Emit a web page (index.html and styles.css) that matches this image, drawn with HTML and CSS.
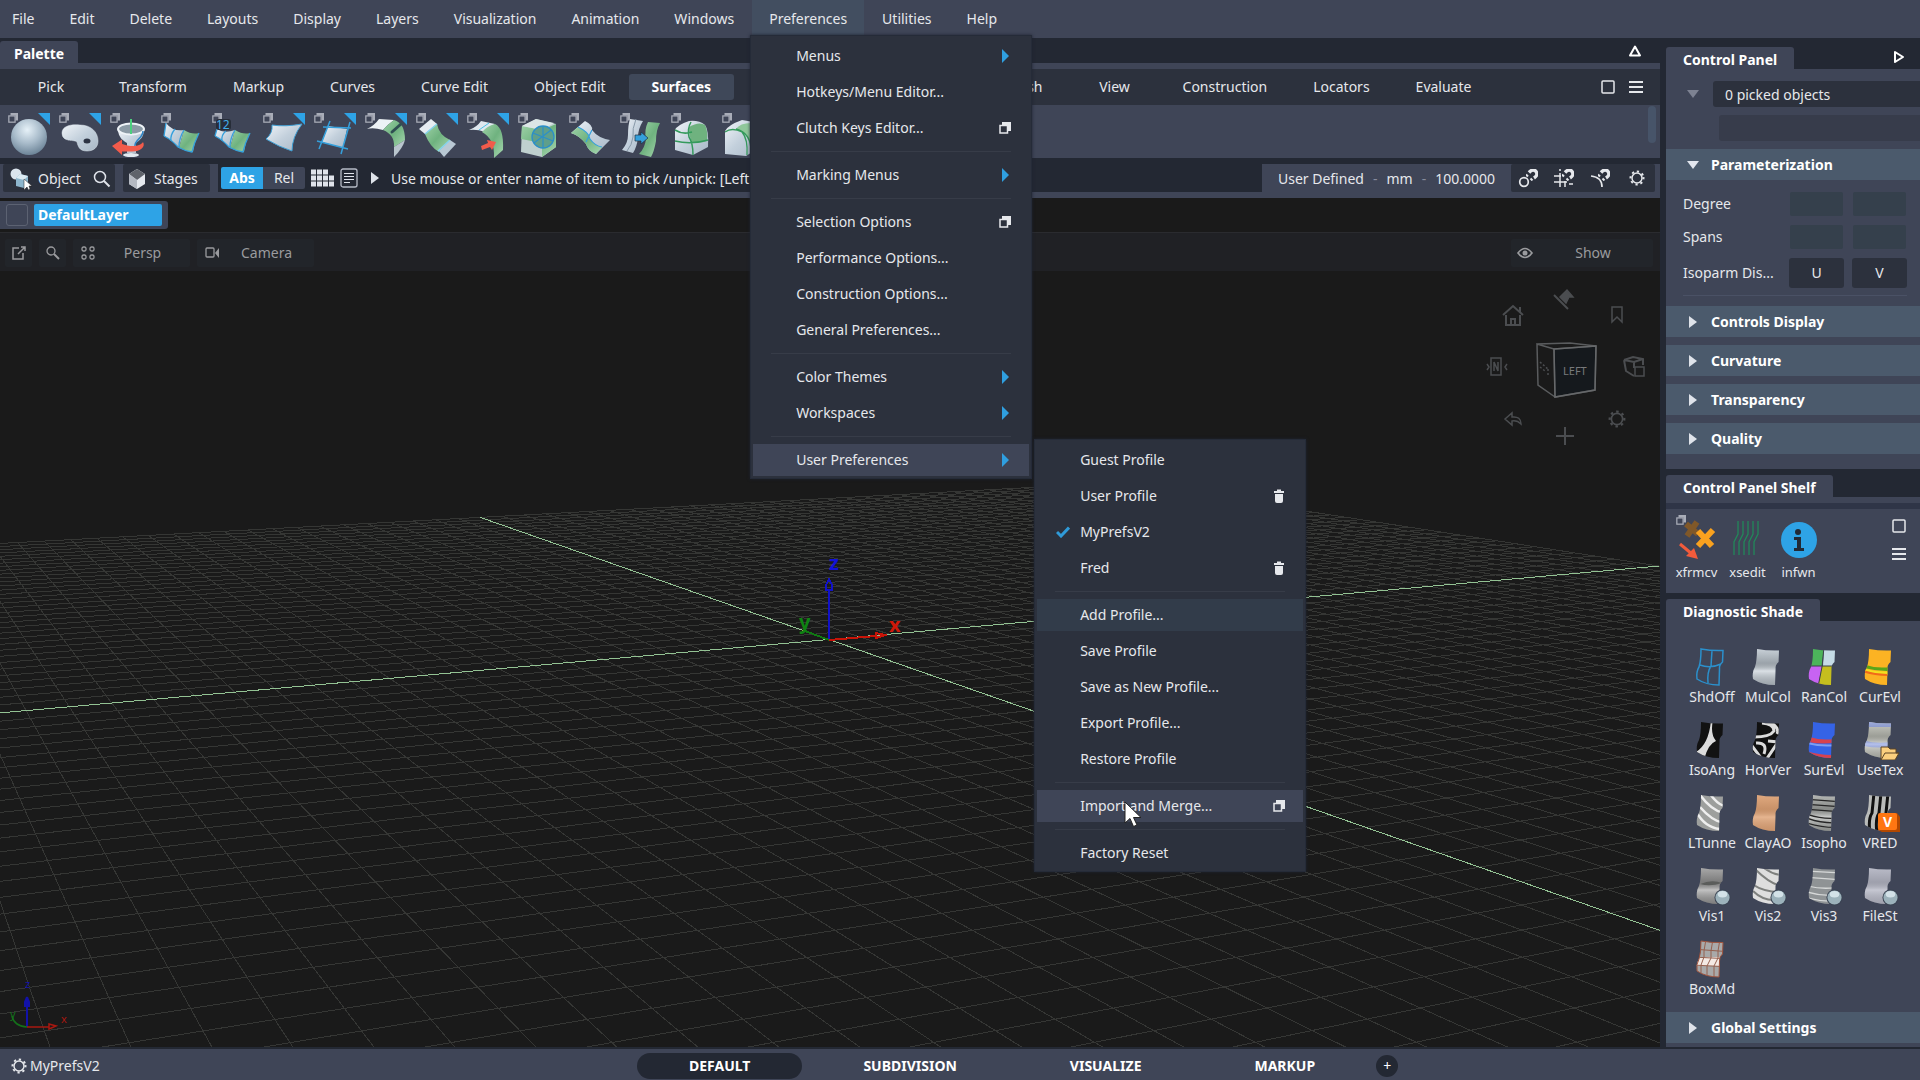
FILE: index.html
```html
<!DOCTYPE html>
<html lang="en">
<head>
    <meta charset="UTF-8">
    <meta name="viewport" content="width=device-width, initial-scale=1.0">
    <title>Surface Modeler</title>
    <link rel="stylesheet" href="styles.css">
</head>
<body>

    <!-- shared icon shapes -->
    <svg class="defs" width="0" height="0" aria-hidden="true">
        <defs>
            <linearGradient id="steel" x1="0" y1="0" x2="1" y2="1"><stop offset="0" stop-color="#f0f4f8"/><stop offset="0.5" stop-color="#c3d0dc"/><stop offset="1" stop-color="#a9b8c6"/></linearGradient>
            <linearGradient id="green" x1="0" y1="0" x2="1" y2="1"><stop offset="0" stop-color="#9ed2a8"/><stop offset="0.5" stop-color="#6fb27f"/><stop offset="1" stop-color="#a8d8b0"/></linearGradient>
            <radialGradient id="ball" cx="0.45" cy="0.3" r="0.75"><stop offset="0" stop-color="#e6f1f8"/><stop offset="0.5" stop-color="#a9bccb"/><stop offset="1" stop-color="#647c90"/></radialGradient>
            <linearGradient id="fold" x1="0" y1="0" x2="0" y2="1"><stop offset="0" stop-color="#fff" stop-opacity="0.2"/><stop offset="0.4" stop-color="#000" stop-opacity="0.2"/><stop offset="0.6" stop-color="#fff" stop-opacity="0.4"/><stop offset="1" stop-color="#000" stop-opacity="0.2"/></linearGradient>
            <clipPath id="sheet"><path d="M9 2Q20 4 31 3.500L30.500 15Q27 18 27.500 22L27 38Q14 38 5 32Q4 25 7 20Q9 14 9 2Z"/></clipPath>
            <symbol id="opt" viewBox="0 0 12 12"><path d="M3 0H12V9H9V3H3Z" fill="currentColor"/><rect x="1" y="3.500" width="7.500" height="7.500" fill="none" stroke="currentColor" stroke-width="1.500"/></symbol>
            <symbol id="corner" viewBox="0 0 12 12"><path d="M0 0H12V12Z" fill="#2ea3e6"/></symbol>
            <symbol id="gear" viewBox="0 0 16 16"><circle cx="8" cy="8" r="5" fill="none" stroke="currentColor" stroke-width="1.500"/><circle cx="8" cy="8" r="6.500" fill="none" stroke="currentColor" stroke-width="2" stroke-dasharray="2.200 2.900" transform="rotate(-8 8 8)"/></symbol>
            <symbol id="trash" viewBox="0 0 12 14"><path d="M1 2H4V0.500H8V2H11V4H1ZM2 5H10V12Q10 14 8 14H4Q2 14 2 12Z" fill="currentColor"/></symbol>
            <symbol id="magnet" viewBox="0 0 12 12"><path d="M3 3.500Q7 -1 10 2.500Q12.500 6 8 9" fill="none" stroke="currentColor" stroke-width="3.400"/><path d="M0 5.500L2 7.500M4.500 9.500L6.500 11.500" stroke="currentColor" stroke-width="2"/></symbol>
            <symbol id="box" viewBox="0 0 14 14"><rect x="1" y="1" width="12" height="12" rx="1" fill="none" stroke="currentColor" stroke-width="1.500"/></symbol>
            <symbol id="bars" viewBox="0 0 14 12"><path d="M0 1H14M0 6H14M0 11H14" stroke="currentColor" stroke-width="2"/></symbol>
            <symbol id="marble" viewBox="0 0 18 18"><circle cx="9" cy="9" r="8.500" fill="#3a4352"/><circle cx="9" cy="9" r="7.500" fill="#9cb2bb"/><ellipse cx="9" cy="5.500" rx="5" ry="3.500" fill="#d3e2e8"/></symbol>
        </defs>
    </svg>

    <nav class="menubar">
        <button>File</button>
        <button>Edit</button>
        <button>Delete</button>
        <button>Layouts</button>
        <button>Display</button>
        <button>Layers</button>
        <button>Visualization</button>
        <button>Animation</button>
        <button>Windows</button>
        <div class="menu-holder">
            <button class="open">Preferences</button>
            <ul class="menu main-menu">
                <li><button>Menus<span class="arrow"></span></button></li>
                <li><button>Hotkeys/Menu Editor...</button></li>
                <li><button>Clutch Keys Editor...<svg width="12" height="12"><use href="#opt"/></svg></button></li>
                <li class="sep"></li>
                <li><button>Marking Menus<span class="arrow"></span></button></li>
                <li class="sep"></li>
                <li><button>Selection Options<svg width="12" height="12"><use href="#opt"/></svg></button></li>
                <li><button>Performance Options...</button></li>
                <li><button>Construction Options...</button></li>
                <li><button>General Preferences...</button></li>
                <li class="sep"></li>
                <li><button>Color Themes<span class="arrow"></span></button></li>
                <li><button>Workspaces<span class="arrow"></span></button></li>
                <li class="sep"></li>
                <li>
                    <button class="active">User Preferences<span class="arrow"></span></button>
                    <ul class="menu sub-menu">
                        <li><button>Guest Profile</button></li>
                        <li><button>User Profile<svg width="12" height="14"><use href="#trash"/></svg></button></li>
                        <li><button>MyPrefsV2</button><svg class="check" width="14" height="12" viewBox="0 0 14 12"><path d="M1 6L5 10L13 1.500" fill="none" stroke="#2f9ad8" stroke-width="3"/></svg></li>
                        <li><button>Fred<svg width="12" height="14"><use href="#trash"/></svg></button></li>
                        <li class="sep"></li>
                        <li><button class="soft">Add Profile...</button></li>
                        <li><button>Save Profile</button></li>
                        <li><button>Save as New Profile...</button></li>
                        <li><button>Export Profile...</button></li>
                        <li><button>Restore Profile</button></li>
                        <li class="sep"></li>
                        <li>
                            <button class="active">Import and Merge...<svg width="12" height="12"><use href="#opt"/></svg></button>
                            <svg class="cursor" width="19" height="27" viewBox="0 0 19 27"><path d="M1 1V22L6 17.500L9.500 25.500L13 24L9.500 16.500H17Z" fill="#fff" stroke="#222" stroke-width="1"/></svg>
                        </li>
                        <li class="sep"></li>
                        <li><button>Factory Reset</button></li>
                    </ul>
                </li>
            </ul>
        </div>
        <button>Utilities</button>
        <button>Help</button>
    </nav>

    <main class="workspace">
        <section class="left">

            <div class="strip">
                <h2 class="tab">Palette</h2>
                <svg class="collapse" width="14" height="12" viewBox="0 0 14 12"><path d="M7 1.500L12 10.500H2Z" fill="none" stroke="#fff" stroke-width="2" stroke-linejoin="round"/></svg>
            </div>

            <div class="categories">
                <button>Pick</button>
                <button>Transform</button>
                <button>Markup</button>
                <button>Curves</button>
                <button>Curve Edit</button>
                <button>Object Edit</button>
                <button class="current">Surfaces</button>
                <button>Surface Edit</button>
                <button>Subdivision</button>
                <button>Mesh</button>
                <button>View</button>
                <button>Construction</button>
                <button>Locators</button>
                <button>Evaluate</button>
                <span class="category-icons">
                    <svg width="14" height="14"><use href="#box"/></svg>
                    <svg width="14" height="12"><use href="#bars"/></svg>
                </span>
            </div>

            <div class="tools">
                <button aria-label="Sphere"><svg viewBox="0 0 51 53"><circle cx="25" cy="32" r="18" fill="url(#ball)"/><use href="#opt" x="4" y="8" width="10" height="10"/><use href="#corner" x="34" y="8" width="12" height="12"/></svg></button>
                <button aria-label="Planar"><svg viewBox="0 0 51 53"><path d="M7 28C7 21 16 19 25 20C36 20 43 27 43 36C43 43 38 46 32 46C24 46 23 41 22 37C20 34 7 38 7 28Z" fill="url(#steel)" stroke="#dfe8f0" stroke-width="0.500"/><ellipse cx="32" cy="36" rx="3.500" ry="2.500" fill="#2d3444"/><use href="#opt" x="4" y="8" width="10" height="10"/><use href="#corner" x="34" y="8" width="12" height="12"/></svg></button>
                <button aria-label="Revolve"><svg viewBox="0 0 51 53"><path d="M12 24C12 33 18 36 21 38V48H30V38C34 35 38 32 38 24Z" fill="url(#steel)"/><ellipse cx="25" cy="24" rx="13" ry="5.500" fill="#8b9aa5" stroke="#eef3f7" stroke-width="2"/><path d="M25 14V29" stroke="#4bd07d" stroke-width="2"/><path d="M37 26C37 34 28 34 29 42L25 44" fill="none" stroke="#2d83c4" stroke-width="1.500"/><path d="M37 37C40 42 34 47 25 46.500H16V50L6 41L16 34.500V39C24 42 34 42 37 37Z" fill="#f25b4b"/><ellipse cx="25" cy="50" rx="8" ry="2" fill="#e2eaf1"/><use href="#opt" x="4" y="8" width="10" height="10"/></svg></button>
                <button aria-label="Skin"><svg viewBox="0 0 51 53"><path d="M9 18Q16 27 27 25L22 43Q15 35 7 31Z" fill="url(#steel)"/><path d="M27 25Q35 30 42 28Q37 38 36 47Q28 46 22 43Z" fill="url(#green)"/><path d="M9 18Q8 25 7 31M18 24Q13 30 14 36M27 25Q22 33 22 42M42 28Q37 38 35 47Q28 46 21 42Q15 35 7 31" fill="none" stroke="#35a0dc" stroke-width="1.300"/><use href="#opt" x="4" y="8" width="10" height="10"/></svg></button>
                <button aria-label="Rail"><svg viewBox="0 0 51 53"><path d="M9 24Q16 29 27 25L22 43Q15 35 7 31Z" fill="url(#steel)"/><path d="M27 25Q35 30 42 28Q37 38 36 47Q28 46 22 43Z" fill="url(#green)"/><path d="M9 24L7 31M18 26Q13 30 14 36M27 25Q22 33 22 42M42 28Q37 38 35 47Q28 46 21 42Q15 35 7 31" fill="none" stroke="#35a0dc" stroke-width="1.300"/><use href="#opt" x="4" y="8" width="10" height="10"/><rect x="8" y="14" width="15" height="11" rx="3" fill="#272d38"/><text x="8" y="24" class="count">12</text></svg></button>
                <button aria-label="Square"><svg viewBox="0 0 51 53"><path d="M13 20Q26 22 43 19Q33 32 33 46Q20 42 7 34Q14 28 13 20Z" fill="url(#steel)" stroke="#3f9fd4" stroke-width="1"/><use href="#opt" x="4" y="8" width="10" height="10"/><use href="#corner" x="34" y="8" width="12" height="12"/></svg></button>
                <button aria-label="Bevel"><svg viewBox="0 0 51 53"><path d="M18 21L37 24L33 43L12 37Z" fill="url(#steel)"/><path d="M13 22L41 23M20 16L9 44M40 17L31 49M7 36L38 44" stroke="#35a0dc" stroke-width="1.500"/><use href="#opt" x="4" y="8" width="10" height="10"/><use href="#corner" x="34" y="8" width="12" height="12"/></svg></button>
                <button aria-label="Fillet"><svg viewBox="0 0 51 53"><use href="#corner" x="34" y="8" width="12" height="12"/><path d="M6 24Q14 20 18 14L33 15Q26 20 22 25Q12 22 6 24Z" fill="#edf2f5"/><path d="M33 15Q44 18 44 35L33 42Q34 30 22 25Q26 20 33 15Z" fill="url(#green)"/><path d="M33 42L44 35Q42 43 33 52Z" fill="#b9c5cd"/><path d="M31 27L40 19" stroke="#2f4f52" stroke-width="3" stroke-linecap="round"/><use href="#opt" x="4" y="8" width="10" height="10"/></svg></button>
                <button aria-label="Flange"><svg viewBox="0 0 51 53"><path d="M7 24L19 14L25 19L13 29Z" fill="#e6ecf2"/><path d="M25 19Q27 30 38 35L27 47Q18 42 13 29Z" fill="url(#green)"/><path d="M38 35L44 39L32 52L27 46Z" fill="#b9c8d4"/><path d="M25 19L13 29M38 35L26 46" stroke="#86d3ee" stroke-width="1.500"/><use href="#opt" x="4" y="8" width="10" height="10"/><use href="#corner" x="34" y="8" width="12" height="12"/></svg></button>
                <button aria-label="Extend"><svg viewBox="0 0 51 53"><path d="M6 25Q14 22 18 16L32 19Q26 22 22 27Q14 24 6 25Z" fill="#dfe8ef"/><path d="M32 19Q41 23 40 45L31 53Q32 34 19 27Q24 21 32 19Z" fill="url(#green)"/><path d="M16 25L26 18" stroke="#4cc0e8" stroke-width="1"/><path d="M18 41L25 38L24 35L33 37L29 45L27 42L19 45Z" fill="#f25b4b"/><use href="#opt" x="4" y="8" width="10" height="10"/><use href="#corner" x="34" y="8" width="12" height="12"/></svg></button>
                <button aria-label="Tube offset"><svg viewBox="0 0 51 53"><path d="M8 21L22 14L42 19V42L28 52L7 47Z" fill="#bfd0cf"/><path d="M8 21L28 25V38L7 34ZM28 25L42 19V42L28 52Z" fill="url(#green)"/><path d="M8 21L22 14L40 18L28 25Z" fill="#dce6e6"/><circle cx="29" cy="32" r="11" fill="#5f9f8b" stroke="#2c8fc8" stroke-width="1.300"/><path d="M29 21V43M19 28L39 36M20 38L37 25" stroke="#2c8fc8" stroke-width="1.200"/><use href="#opt" x="4" y="8" width="10" height="10"/></svg></button>
                <button aria-label="Blend"><svg viewBox="0 0 51 53"><path d="M6 28L20 16Q28 20 27 25Q33 33 45 35L31 49Q23 46 21 39Q15 31 6 28Z" fill="url(#steel)"/><path d="M6 28L13 22Q24 27 25 34Q30 41 37 42L31 49Q23 46 21 39Q15 31 6 28Z" fill="url(#green)"/><path d="M13 22Q24 27 25 34Q30 41 37 42M27 25L21 37" fill="none" stroke="#35a0dc" stroke-width="1.200"/><use href="#opt" x="4" y="8" width="10" height="10"/></svg></button>
                <button aria-label="Align"><svg viewBox="0 0 51 53"><path d="M14 14L27 16Q22 24 22 32Q21 42 17 48L6 45Q12 38 12 30Q12 20 14 14Z" fill="url(#steel)"/><path d="M32 17L44 18Q40 25 40 36Q38 47 35 52L23 49Q29 43 30 34Q28 25 32 17Z" fill="url(#green)"/><path d="M20 14Q16 24 17 32Q16 40 11 46" fill="none" stroke="#8899a8" stroke-width="1"/><path d="M19 30H25V27L32 33L25 39V36H19Z" fill="#35a0dc" stroke="#1e3044" stroke-width="0.700"/><use href="#opt" x="4" y="8" width="10" height="10"/></svg></button>
                <button aria-label="Subdivide"><svg viewBox="0 0 51 53"><path d="M8 25Q10 20 22 16Q32 15 38 20Q42 25 41 42L26 50L8 45Z" fill="url(#steel)"/><path d="M22 22Q32 16 38 20Q41 26 40 36Q33 39 25 37Q22 32 22 22Z" fill="#6fb27f"/><path d="M8 36Q24 40 41 35M8 25Q16 30 25 27M24 17Q20 24 22 32Q26 38 26 50" fill="none" stroke="#349a5c" stroke-width="1.500"/><use href="#opt" x="4" y="8" width="10" height="10"/></svg></button>
                <button aria-label="Round"><svg viewBox="0 0 51 53"><path d="M7 26Q10 20 24 15L42 18V42L28 51L7 49Z" fill="url(#steel)"/><path d="M18 24Q22 18 33 18Q42 22 42 42L33 46Q32 28 18 24Z" fill="#8fc79a"/><path d="M7 27Q14 22 24 27Q30 34 29 50M18 24Q33 28 33 46" fill="none" stroke="#349a5c" stroke-width="1.300"/><use href="#opt" x="4" y="8" width="10" height="10"/></svg></button>
                <span class="scroll-thumb"></span>
            </div>

            <div class="prompt-row">
                <div class="chip">
                    <svg width="22" height="22" viewBox="0 0 22 22"><circle cx="6" cy="6" r="5.500" fill="#dbe5ee"/><path d="M6 10L10 6L18 8V17L14 20L6 18Z" fill="#8db6cd"/><path d="M6 10L10 6L18 8L14 12Z" fill="#dcebf3"/><path d="M14 11V22L17 19L18.500 22L20 21L19 18H22Z" fill="#fff" stroke="#222" stroke-width="0.500"/></svg>
                    <button>Object</button>
                    <svg class="search" width="18" height="18" viewBox="0 0 18 18"><circle cx="7" cy="7" r="5.500" fill="none" stroke="#dfe3ea" stroke-width="1.500"/><path d="M11 11L16.500 16.500" stroke="#dfe3ea" stroke-width="2"/></svg>
                </div>
                <div class="chip stages">
                    <svg width="18" height="20" viewBox="0 0 18 20"><path d="M9 0L17 5V15L9 20L1 15V5Z" fill="#e4e8ee"/><path d="M9 0L17 5L9 11L1 5Z" fill="#5f636b"/><path d="M1 5L9 11V20L1 15Z" fill="#b4b9c2"/></svg>
                    <button>Stages</button>
                </div>
                <div class="prompt">
                    <button class="abs">Abs</button><button class="rel">Rel</button>
                    <svg class="pad" width="24" height="18" viewBox="0 0 24 18"><path d="M1 3H18M1 9H24M1 15H24" stroke="#dfe3ea" stroke-width="5" stroke-dasharray="5 1"/></svg>
                    <svg width="18" height="20" viewBox="0 0 18 20"><rect x="1" y="1" width="16" height="18" rx="2" fill="none" stroke="#b5bac6" stroke-width="1.300"/><path d="M4 5.500H14M4 8.500H14M4 11.500H14M4 14.500H10" stroke="#dfe3ea" stroke-width="1.200"/></svg>
                    <span class="play"></span>
                    <input type="text" aria-label="Prompt" value="Use mouse or enter name of item to pick /unpick: [Left Toggle]">
                </div>
                <div class="units"><span>User Defined</span><i>-</i><span>mm</span><i>-</i><span>100.0000</span></div>
                <div class="snaps">
                    <svg width="20" height="20" viewBox="0 0 20 20"><circle cx="6" cy="14" r="4.300" fill="none" stroke="currentColor" stroke-width="1.700"/><use href="#magnet" x="8" y="1" width="12" height="12"/></svg>
                    <svg width="20" height="20" viewBox="0 0 20 20"><path d="M6 5V19M11 13V19M0 8H7M0 14H13M6 1V3M15 16H19" stroke="currentColor" stroke-width="1.500"/><use href="#magnet" x="8" y="1" width="12" height="12"/></svg>
                    <svg width="20" height="20" viewBox="0 0 20 20"><path d="M1 8Q12 9 12 19" fill="none" stroke="currentColor" stroke-width="1.700"/><use href="#magnet" x="8" y="1" width="12" height="12"/></svg>
                    <svg width="20" height="20" viewBox="0 0 20 20"><use href="#gear" x="3" y="2" width="16" height="16"/></svg>
                </div>
            </div>

            <div class="layers">
                <div class="layer">
                    <input type="checkbox" aria-label="Layer visible">
                    <button>DefaultLayer</button>
                </div>
            </div>

            <div class="view-bar">
                <button aria-label="Pop out"><svg width="14" height="14" viewBox="0 0 14 14"><path d="M7 2H1V13H11V7M9 1H13V5M13 1L6 8" fill="none" stroke="currentColor" stroke-width="1.500"/></svg></button>
                <button aria-label="Zoom"><svg width="14" height="14" viewBox="0 0 14 14"><circle cx="5" cy="5" r="4" fill="none" stroke="currentColor" stroke-width="1.300"/><path d="M8 8L13 13" stroke="currentColor" stroke-width="2"/></svg></button>
                <button class="persp"><svg width="14" height="14" viewBox="0 0 14 14"><g fill="none" stroke="currentColor" stroke-width="1.300"><rect x="1" y="1" width="4" height="4" rx="1.500"/><rect x="9" y="1" width="4" height="4" rx="1.500"/><rect x="1" y="9" width="4" height="4" rx="1.500"/><rect x="9" y="9" width="4" height="4" rx="1.500"/></g></svg><span>Persp</span></button>
                <button class="camera"><svg width="14" height="12" viewBox="0 0 14 12"><rect x="1" y="1" width="8" height="9" rx="1" fill="none" stroke="currentColor" stroke-width="1.300"/><path d="M10 6L14 1V11Z" fill="currentColor"/></svg><span>Camera</span></button>
                <button class="show"><svg width="16" height="12" viewBox="0 0 16 12"><path d="M1 6Q8 -3 15 6Q8 15 1 6Z" fill="none" stroke="currentColor" stroke-width="1.700"/><circle cx="8" cy="6" r="2.500" fill="currentColor"/></svg><span>Show</span></button>
            </div>

            <div class="viewport">
                <svg class="scene" viewBox="0 271 1660 776" preserveAspectRatio="xMidYMid slice">
                    <g id="grid"></g>
                    <g fill="none" stroke-width="2" shape-rendering="crispEdges">
                        <path d="M829 640V590M829 579L826 585V590H832V585Z" stroke="#1212c8"/>
                        <path d="M829 640L876 636M876 633L885 635L876 638Z" stroke="#c81408"/>
                        <path d="M829 640L805 631" stroke="#0f7a12"/>
                    </g>
                    <g class="axis-names">
                        <text x="829" y="570" fill="#1212d8">z</text>
                        <text x="889" y="632" fill="#d01808">x</text>
                        <text x="799" y="629" fill="#0f8212">y</text>
                    </g>
                    <g fill="none" stroke-width="2">
                        <path d="M27 1027V997L25 1002V1006H29V1002L27 997" stroke="#1212a8"/>
                        <path d="M27 1027H49M49 1024L56 1026L49 1029Z" stroke="#a81810" stroke-width="1.500"/>
                        <path d="M27 1027Q14 1026 12 1016" stroke="#14701a" stroke-width="1.500"/>
                    </g>
                    <g class="axis-small">
                        <text x="25" y="988" fill="#1212a8">z</text>
                        <text x="61" y="1023" fill="#a81810">x</text>
                        <text x="10" y="1018" fill="#14701a">y</text>
                    </g>
                </svg>

                <svg class="view-cube" width="170" height="165" viewBox="1480 285 170 165" fill="none" stroke="#4b4d50" stroke-width="1.500">
                    <path d="M1554 349L1596 346L1595 390L1555 397Z" fill="#15191d"/>
                    <path d="M1554 349L1537 344L1538 385L1555 397M1537 344L1570 343L1596 346" stroke="#5a5c5e"/>
                    <path d="M1554 349L1596 346L1595 390L1555 397Z" stroke="#66686a"/>
                    <text x="1563" y="375" class="cube-face">LEFT</text>
                    <path d="M1540 362L1549 370M1540 367L1545 371M1548 375V367" stroke-dasharray="2 2"/>
                    <path d="M1503 315L1513 306L1523 315M1506 315V325H1520V315M1511 325V319H1515V325M1520 307V312" stroke-width="2"/>
                    <path d="M1554 295L1568 309" stroke-width="2"/><path d="M1560 297L1567 290L1573 297L1569 297L1566 303Z" fill="#4b4d50"/>
                    <path d="M1612 307H1622V322L1617 317L1612 322Z"/>
                    <rect x="1491" y="358" width="10" height="17"/><path d="M1494 371V362L1498 371V362M1487 364L1489 367L1487 370M1507 364L1505 367L1507 370"/>
                    <path d="M1624 360L1633 357L1643 359V365M1624 360L1634 362L1643 359M1624 360L1626 371L1634 376M1634 362V368" stroke-width="2"/><rect x="1635" y="367" width="9" height="9"/>
                    <path d="M1505 419L1512 413V417Q1521 416 1521 424Q1517 420 1512 421V425Z"/>
                    <path d="M1565 427V445M1556 436H1574" stroke-width="2"/>
                    <g color="#4b4d50"><use href="#gear" x="1608" y="410" width="18" height="18" stroke="none"/></g>
                </svg>
            </div>
        </section>

        <aside class="right">
            <div class="strip panel-strip">
                <h2 class="tab">Control Panel</h2>
                <svg width="12" height="14" viewBox="0 0 12 14"><path d="M2 2L10 7L2 12Z" fill="none" stroke="#fff" stroke-width="2" stroke-linejoin="round"/></svg>
            </div>
            <div class="panel control">
                <div class="picked">
                    <span class="down dim"></span>
                    <input type="text" aria-label="Picked objects" value="0 picked objects">
                    <input type="text" class="second" aria-label="Object name" disabled>
                </div>
                <button class="fold"><span class="down"></span>Parameterization</button>
                <div class="params">
                    <label for="degreeU">Degree</label><input id="degreeU" disabled><input aria-label="Degree V" disabled>
                    <label for="spansU">Spans</label><input id="spansU" disabled><input aria-label="Spans V" disabled>
                    <span>Isoparm Dis...</span><button>U</button><button>V</button>
                </div>
                <button class="fold"><span class="play"></span>Controls Display</button>
                <button class="fold"><span class="play"></span>Curvature</button>
                <button class="fold"><span class="play"></span>Transparency</button>
                <button class="fold"><span class="play"></span>Quality</button>
            </div>

            <div class="strip"><h2 class="tab">Control Panel Shelf</h2></div>
            <div class="rule"></div>
            <div class="panel shelf">
                <button><svg width="44" height="46" viewBox="0 0 44 46"><g stroke-width="6"><path d="M11 10L23 20M22 8L12 22" stroke="#805829"/><path d="M23 17L37 32M38 16L23 32" stroke="#f9a11f"/></g><path d="M5 30L17 40" stroke="#f25b3b" stroke-width="3"/><path d="M19 34L23 45L11 42Z" fill="#f25b3b"/><use href="#opt" x="1" y="1" width="10" height="10" color="#a9adb8"/></svg>xfrmcv</button>
                <button><svg width="44" height="46" viewBox="0 0 44 46"><g fill="none" stroke="#23875a" stroke-width="1.300"><path id="wave" d="M12 7V20L8 28V41"/><use href="#wave" x="5"/><use href="#wave" x="10"/><use href="#wave" x="15"/><use href="#wave" x="20"/></g></svg>xsedit</button>
                <button><svg width="44" height="46" viewBox="0 0 44 46"><circle cx="22" cy="26" r="18" fill="#2ea3e6"/><circle cx="21" cy="18" r="3" fill="#222a35"/><path d="M17 23H24V34H27V37H17V34H20V26H17Z" fill="#222a35"/></svg>infwn</button>
                <span class="shelf-icons">
                    <svg width="14" height="14"><use href="#box"/></svg>
                    <svg width="14" height="12"><use href="#bars"/></svg>
                </span>
            </div>

            <div class="strip"><h2 class="tab">Diagnostic Shade</h2></div>
            <div class="panel shade">
                <div class="shades">
                    <button><svg viewBox="0 0 40 40"><path d="M9 2Q20 4 31 3.500L30.500 15Q27 18 27.500 22L27 38Q14 38 5 32Q4 25 7 20Q9 14 9 2ZM20 3.500L19 19Q15 25 16 36M8 18Q18 22 29 17" fill="none" stroke="#2b90cc" stroke-width="1.500"/></svg>ShdOff</button>
                    <button><svg viewBox="0 0 40 40"><g clip-path="url(#sheet)"><rect width="40" height="40" fill="#c2ccd5"/><rect width="40" height="40" fill="url(#fold)"/></g></svg>MulCol</button>
                    <button><svg viewBox="0 0 40 40"><g clip-path="url(#sheet)"><path d="M0 0H20L18 19H0Z" fill="#4cb45b"/><path d="M20 0H40V19H19Z" fill="#c5dbe6"/><path d="M0 19H18L14 40H0Z" fill="#c763f2"/><path d="M18 19H40V40H14Z" fill="#c5be1e"/><path d="M20 0L18 20L14 40M5 19H34" stroke="#39434d" stroke-width="1" fill="none"/></g></svg>RanCol</button>
                    <button><svg viewBox="0 0 40 40"><g clip-path="url(#sheet)"><rect width="40" height="40" fill="#fcb323"/><path d="M0 16Q18 24 40 18V23Q20 26 0 20Z" fill="#5aa51a"/><path d="M0 20Q18 27 40 23V27Q20 30 0 23Z" fill="#f4e01e"/><path d="M0 23Q18 30 40 27" stroke="#f26a1a" stroke-width="2" fill="none"/></g></svg>CurEvl</button>
                    <button><svg viewBox="0 0 40 40"><g clip-path="url(#sheet)"><rect width="40" height="40" fill="#121212"/><path d="M19 0H21Q18 14 24 21Q16 24 12 40L4 32Q17 24 19 0Z" fill="#dcdcdc"/></g></svg>IsoAng</button>
                    <button><svg viewBox="0 0 40 40"><g clip-path="url(#sheet)"><rect width="40" height="40" fill="#111"/><path d="M14 3Q26 4 26 11Q22 17 6 17M22 2Q32 8 29 14M8 23Q20 22 16 34M20 21L30 22L18 40M4 26L13 38" stroke="#dcdcdc" stroke-width="3" fill="none"/></g></svg>HorVer</button>
                    <button><svg viewBox="0 0 40 40"><g clip-path="url(#sheet)"><rect width="40" height="40" fill="#3563e6"/><path d="M0 15Q18 23 40 17V21Q20 26 0 21Z" fill="#d8424e"/><path d="M0 30Q18 37 40 34V40H0Z" fill="#d8424e"/><path d="M0 22Q18 28 40 24" stroke="#7d9ff2" stroke-width="2" fill="none"/></g></svg>SurEvl</button>
                    <button><svg viewBox="0 0 40 40"><g clip-path="url(#sheet)"><rect width="40" height="40" fill="#c4c6bd"/><path d="M0 0H40V7H0Z" fill="#8d9edb"/><path d="M0 19Q18 26 40 20V25Q18 30 0 25Z" fill="#8498e0"/><rect width="40" height="40" fill="url(#fold)"/></g><path d="M21 27H28L30 29H36V33H39L35 40H21Z" fill="#fbcf7e" stroke="#5c4526" stroke-width="1"/><path d="M21 40L25 33H39" fill="none" stroke="#5c4526" stroke-width="1"/></svg>UseTex</button>
                    <button><svg viewBox="0 0 40 40"><g clip-path="url(#sheet)"><rect width="40" height="40" fill="#9d9f9d"/><path d="M8 2Q20 18 32 20M18 1Q26 12 33 13M4 18Q12 34 28 36M8 14Q20 28 32 30" stroke="#eee" stroke-width="2.500" fill="none"/></g></svg>LTunne</button>
                    <button><svg viewBox="0 0 40 40"><g clip-path="url(#sheet)"><rect width="40" height="40" fill="#dfa274"/><rect width="40" height="40" fill="url(#fold)" opacity="0.500"/></g></svg>ClayAO</button>
                    <button><svg viewBox="0 0 40 40"><g clip-path="url(#sheet)"><rect width="40" height="40" fill="#a9aca9"/><rect width="40" height="40" fill="url(#fold)"/><path d="M0 6L40 9M0 11L40 14M0 16L40 19M0 20Q20 28 40 24M0 24Q20 32 40 29M0 29Q20 36 40 34" stroke="#262626" stroke-width="1.300" fill="none"/></g></svg>Isopho</button>
                    <button><svg viewBox="0 0 40 40"><g clip-path="url(#sheet)"><rect width="40" height="40" fill="#b9bbb9"/><path d="M14 0L12 20Q8 26 10 40M21 0L19 20Q15 26 17 40M28 0L26 20Q23 26 24 40" stroke="#111" stroke-width="3" fill="none"/></g><path d="M19 22L37 20L40 24V39H22L18 37Z" fill="#b34800"/><rect x="18" y="20" width="19" height="17" rx="2" fill="#ff7612"/><text x="23" y="34" class="vred">V</text></svg>VRED</button>
                    <button><svg viewBox="0 0 40 40"><g clip-path="url(#sheet)"><rect width="40" height="40" fill="#9a9a9a"/><rect width="40" height="40" fill="url(#fold)"/><path d="M8 18Q20 13 30 17Q18 21 8 18Z" fill="#5b5d5b"/></g><use href="#marble" x="22" y="23" width="17" height="17"/></svg>Vis1</button>
                    <button><svg viewBox="0 0 40 40"><g clip-path="url(#sheet)"><rect width="40" height="40" fill="#dedede"/><path d="M8 4Q20 16 32 20M16 2Q24 8 32 9M4 18Q16 26 32 26M5 25Q14 34 26 34" stroke="#7e807e" stroke-width="2" fill="none"/></g><use href="#marble" x="22" y="23" width="17" height="17"/></svg>Vis2</button>
                    <button><svg viewBox="0 0 40 40"><g clip-path="url(#sheet)"><rect width="40" height="40" fill="#8f9395"/><path d="M0 5L40 7M0 11L40 14M0 19Q20 25 40 20M0 25Q20 32 40 28M0 31Q20 37 40 35" stroke="#d6d8d8" stroke-width="1.300" fill="none"/></g><use href="#marble" x="22" y="23" width="17" height="17"/></svg>Vis3</button>
                    <button><svg viewBox="0 0 40 40"><g clip-path="url(#sheet)"><rect width="40" height="40" fill="#b4b6c4"/><rect width="40" height="40" fill="url(#fold)" opacity="0.600"/></g><use href="#marble" x="22" y="23" width="17" height="17"/></svg>FileSt</button>
                    <button><svg viewBox="0 0 40 40"><g clip-path="url(#sheet)"><rect width="40" height="40" fill="#a9a9a9"/><path d="M0 18H40V27H0Z" fill="#f4e9e4"/><path d="M14 0L12 12L12 18L9 26V40M21 0L19 12V19L15 27V40M28 0L26 12V19L22 27V40M0 10L40 13M0 18L40 20M0 26L40 28" stroke="#94604f" stroke-width="1" fill="none"/></g><path d="M9 2Q20 4 31 3.500L30.500 15Q27 18 27.500 22L27 38Q14 38 5 32Q4 25 7 20Q9 14 9 2Z" fill="none" stroke="#a0553f" stroke-width="1"/></svg>BoxMd</button>
                </div>
                <button class="fold"><span class="play"></span>Global Settings</button>
            </div>
        </aside>
    </main>

    <footer class="status">
        <div class="profile"><svg width="16" height="16"><use href="#gear"/></svg>MyPrefsV2</div>
        <button class="current">DEFAULT</button>
        <button>SUBDIVISION</button>
        <button>VISUALIZE</button>
        <button>MARKUP</button>
        <button class="add" aria-label="Add workspace">+</button>
    </footer>

    <script src="script.js"></script>
</body>
</html>
```

FILE: styles.css
```css
* { box-sizing: border-box; }
body { margin: 0; height: 100vh; display: flex; flex-direction: column; overflow: hidden; background: #232833; color: #e6e8ec; font-family: "Noto Sans", "Open Sans", sans-serif; font-size: 14px; line-height: 20px; }
button, input { font: inherit; color: inherit; border: 0; margin: 0; padding: 0; background: none; }
h2 { margin: 0; font-size: 14px; }
svg { display: block; flex: none; }
.defs { position: absolute; }

/* menu bar */
.menubar { flex: none; display: flex; gap: 1px; height: 38px; background: #3f4557; }
.menubar > button, .menu-holder > button { height: 38px; padding: 0 17px; }
.menubar > button:first-child { padding-left: 12px; }
.menu-holder { position: relative; z-index: 10; }
.menu-holder > .open { background: #424e60; }

.menu { position: absolute; list-style: none; margin: 0; padding: 2px 2px 0; background: #2c313d; border: 1px solid #252b38; box-shadow: 0 0 3px #1d2230; }
.main-menu { top: 35px; left: -2px; width: 282px; }
.sub-menu { top: -3px; left: 100%; margin-left: 5px; width: 272px; }
.menu li { position: relative; padding: 2px 0; }
.menu li > button { display: flex; align-items: center; justify-content: space-between; width: 100%; height: 32px; padding: 0 18px 0 43px; text-align: left; }
.menu li > .active { background: #3f4557; }
.menu li > .soft { background: #323c4a; }
.menu .sep { height: 1px; margin: 5px 18px; padding: 0; background: #373c48; }
.menu .arrow { border-left: 7px solid #2f9fe0; border-top: 7px solid transparent; border-bottom: 7px solid transparent; margin-right: 2px; }
.check { position: absolute; left: 19px; top: 12px; }
.cursor { position: absolute; left: 87px; top: 13px; }

/* layout */
.workspace { flex: 1; min-height: 0; display: flex; gap: 6px; }
.left { flex: 1; min-width: 0; display: flex; flex-direction: column; }
.right { width: 254px; flex: none; display: flex; flex-direction: column; overflow: hidden; }

.strip { flex: none; display: flex; justify-content: space-between; padding: 3px 18px 0 0; }
.tab { height: 22px; padding: 0 14px; background: #3f4557; color: #fff; border-radius: 3px 3px 0 0; line-height: 26px; }
.right .tab { padding: 0 17px; }
.collapse { margin-top: 4px; }

/* palette */
.categories { flex: none; display: flex; align-items: center; height: 42px; padding: 0 0 0 6px; border-top: 6px solid #3f4557; background: #2c313d; }
.categories button { min-width: 90px; height: 26px; padding: 0 23px; white-space: nowrap; }
.categories .current { background: #3f4859; border-radius: 3px; font-weight: bold; color: #fff; }
.category-icons { display: flex; align-items: center; gap: 14px; margin-left: auto; padding-right: 17px; }
.tools { flex: none; display: flex; height: 53px; padding-left: 4px; background: #3f4557; color: #a9adb8; }
.tools svg { width: 51px; height: 53px; }
.count { font-size: 12px; fill: #41aee8; }
.scroll-thumb { width: 8px; height: 37px; margin: 1px 4px 0 auto; border-radius: 4px; background: #475469; }

/* prompt line */
.prompt-row { flex: none; display: flex; height: 40px; padding-left: 3px; border-top: 6px solid #232833; border-bottom: 6px solid #3f4557; background: #3f4557; }
.chip { display: flex; align-items: center; gap: 6px; width: 112px; padding: 1px 4px 0 7px; margin-right: 8px; background: #2c313d; border-radius: 2px; }
.chip .search { margin-left: auto; }
.stages { width: 87px; gap: 8px; padding-left: 5px; }
.prompt { flex: 1; min-width: 0; display: flex; align-items: center; padding-left: 3px; background: #232833; }
.prompt button { width: 42px; height: 22px; }
.prompt .abs { background: #2ea3e6; border-radius: 2px 0 0 2px; font-weight: bold; color: #fff; }
.prompt .rel { background: #3f4557; border-radius: 0 2px 2px 0; }
.prompt .pad { margin: 0 6px 0 5px; }
.prompt .play { margin: 0 12px 0 13px; }
.prompt input { flex: 1; min-width: 0; height: 28px; }
.play { border-left: 8px solid #dfe3ea; border-top: 6px solid transparent; border-bottom: 6px solid transparent; }
.down { border-top: 8px solid #e2e6ee; border-left: 6px solid transparent; border-right: 6px solid transparent; }
.units { display: flex; align-items: center; gap: 9px; padding: 1px 16px 0; }
.units i { font-style: normal; color: #868b9c; }
.snaps { display: flex; align-items: center; gap: 16px; width: 144px; padding-left: 7px; margin-right: 5px; background: #2c313d; border-radius: 2px; }

/* layers and view bar */
.layers { flex: none; height: 34px; padding-top: 3px; background: #1a1a1a; }
.layer { display: flex; align-items: center; gap: 6px; width: 168px; height: 28px; padding: 0 6px; background: #3f4557; border-radius: 0 3px 3px 0; }
.layer input { appearance: none; width: 22px; height: 22px; border: 1px solid #5c6272; border-radius: 3px; }
.layer button { flex: 1; height: 22px; padding-left: 4px; background: #2ea3e6; border-radius: 2px; color: #fff; font-weight: bold; text-align: left; }
.view-bar { flex: none; display: flex; align-items: center; gap: 7px; height: 39px; padding: 1px 7px 0 5px; background: #202125; border-top: 1px solid #2a2b2f; color: #9a9b9e; }
.view-bar button { display: flex; align-items: center; justify-content: center; width: 27px; height: 28px; background: #22252a; border-radius: 2px; }
.view-bar span { flex: 1; text-align: center; }
.view-bar .persp { width: 117px; padding-left: 8px; }
.view-bar .camera { width: 117px; padding-left: 8px; }
.view-bar .show { width: 142px; margin-left: auto; padding-left: 6px; }

/* 3d view */
.viewport { flex: 1; min-height: 0; position: relative; background: #1a1a1a; }
.scene { width: 100%; height: 100%; }
.grid-line { stroke: #353634; stroke-width: 1; shape-rendering: crispEdges; }
.grid-axis { stroke: #93c293; stroke-width: 1; shape-rendering: crispEdges; }
.axis-names { font-size: 20px; font-weight: bold; }
.axis-small { font-size: 11px; }
.view-cube { position: absolute; top: 14px; right: 10px; }
.cube-face { font-size: 11px; fill: #77797b; stroke: none; }

/* right panels */
.right .strip { padding-top: 6px; }
.right .panel-strip { padding-top: 9px; }
.panel-strip svg { margin-top: 3px; margin-right: -3px; }
.panel { flex: none; background: #3f4557; }
.rule { height: 12px; flex: none; border-top: 6px solid #3f4557; background: #2f3547; }
.picked { display: grid; grid-template-columns: 26px 1fr; align-items: center; gap: 8px 0; padding: 12px 13px 8px 21px; }
.picked input { width: 100%; height: 26px; padding-left: 12px; background: #2c313d; border-radius: 3px; }
.picked .second { grid-column: 2; width: auto; margin: 0 6px; background: #373c4b; }
.down.dim { border-top-color: #7d8292; width: 0; }
.fold { display: flex; align-items: center; gap: 14px; width: 100%; height: 31px; margin-bottom: 8px; padding-left: 23px; background: #4b5a6c; color: #fff; font-weight: bold; }
.fold .down { margin: 0 -2px; }
.params { display: grid; grid-template-columns: 1fr 55px 55px; align-items: center; gap: 9px 8px; margin: 0 13px 10px 17px; padding: 4px 0 7px; border-bottom: 1px solid #4a5165; }
.params input { width: 53px; height: 24px; margin-left: 1px; background: #35404c; border-radius: 2px; }
.params button { height: 30px; background: #2c313d; border-radius: 3px; }
.control { padding-bottom: 7px; }
.shelf { display: flex; height: 84px; padding: 5px 14px 0 5px; }
.shelf > button { display: flex; flex-direction: column; align-items: center; width: 51px; font-size: 13px; line-height: 24px; }
.shelf-icons { display: flex; flex-direction: column; gap: 15px; margin: 5px 0 0 auto; }
.shade { flex: 1; padding-top: 26px; }
.shades { display: grid; grid-template-columns: repeat(4, 56px); margin-left: 18px; }
.shades button { display: flex; flex-direction: column; align-items: center; height: 73px; }
.shades svg { width: 40px; height: 40px; }
.vred { font-size: 14px; font-weight: bold; fill: #fff; }

/* status bar */
.status { flex: none; display: flex; align-items: center; gap: 9px; height: 33px; padding-top: 3px; border-top: 2px solid #232833; background: #3f4557; }
.profile { display: flex; align-items: center; gap: 3px; width: 628px; padding-left: 11px; }
.status button { height: 26px; padding: 0 52px; border-radius: 13px; font-weight: bold; color: #fff; }
.status .current { background: #232833; }
.status .add { width: 22px; height: 22px; padding: 0; border-radius: 50%; background: #232833; font-weight: normal; line-height: 20px; }
```

FILE: script.js
```js
// ground plane in perspective, u and v run from -1 to 1
const CELLS = 34;
const SVG_NS = "http://www.w3.org/2000/svg";

function project(u, v) {
    const w = 1 + 0.2517 * u + 0.502 * v;
    return [(829 + 1247.4 * u - 107.9 * v) / w, (639.5 + 69 * u + 137.6 * v) / w];
}

function addLine(a, b, name) {
    const line = document.createElementNS(SVG_NS, "line");
    line.setAttribute("x1", a[0]);
    line.setAttribute("y1", a[1]);
    line.setAttribute("x2", b[0]);
    line.setAttribute("y2", b[1]);
    line.setAttribute("class", name);
    document.getElementById("grid").appendChild(line);
}

for (let i = -CELLS; i <= CELLS; i++) {
    const t = i / CELLS;
    addLine(project(t, -1), project(t, 1), "grid-line");
    addLine(project(-1, t), project(1, t), "grid-line");
}

addLine(project(0, -1), project(0, 1), "grid-axis");
addLine(project(-1, 0), project(1, 0), "grid-axis");
```
